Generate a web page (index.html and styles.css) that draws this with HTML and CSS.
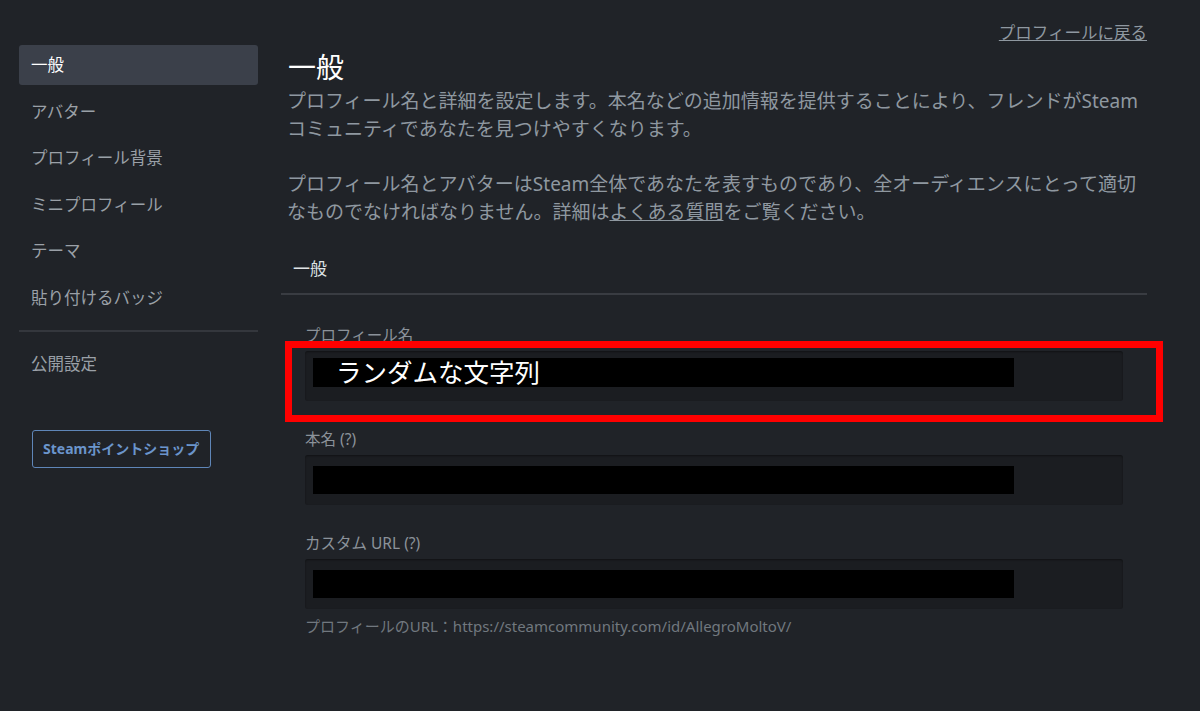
FILE: index.html
```html
<!DOCTYPE html>
<html lang="ja">
<head>
    <meta charset="UTF-8">
    <meta name="viewport" content="width=device-width, initial-scale=1.0">
    <title>プロフィールを編集</title>
    <link rel="stylesheet" href="styles.css">
</head>
<body>
    <div class="page">
        <!-- 左メニュー -->
        <div class="sidebar">
            <div class="nav-item active">一般</div>
            <div class="nav-item">アバター</div>
            <div class="nav-item">プロフィール背景</div>
            <div class="nav-item">ミニプロフィール</div>
            <div class="nav-item">テーマ</div>
            <div class="nav-item">貼り付けるバッジ</div>
            <div class="nav-divider"></div>
            <div class="nav-item privacy">公開設定</div>
            <a class="shop-button" href="#">Steamポイントショップ</a>
        </div>

        <!-- 本体 -->
        <div class="main">
            <div class="back-row">
                <a class="back-link" href="#">プロフィールに戻る</a>
            </div>
            <h1 class="page-title">一般</h1>
            <p class="desc">プロフィール名と詳細を設定します。本名などの追加情報を提供することにより、フレンドがSteamコミュニティであなたを見つけやすくなります。</p>
            <p class="desc">プロフィール名とアバターはSteam全体であなたを表すものであり、全オーディエンスにとって適切なものでなければなりません。詳細は<a href="#">よくある質問</a>をご覧ください。</p>

            <div class="section-head">一般</div>

            <div class="fields">
                <div class="field">
                    <div class="field-label">プロフィール名</div>
                    <div class="input highlighted">
                        <div class="redact first"><span class="redact-text">ランダムな文字列</span></div>
                        <div class="mark"></div>
                    </div>
                </div>
                <div class="field">
                    <div class="field-label">本名 (?)</div>
                    <div class="input">
                        <div class="redact"></div>
                    </div>
                </div>
                <div class="field last">
                    <div class="field-label">カスタム URL (?)</div>
                    <div class="input">
                        <div class="redact"></div>
                    </div>
                    <div class="url-note">プロフィールのURL：https://steamcommunity.com/id/AllegroMoltoV/</div>
                </div>
            </div>
        </div>
    </div>
</body>
</html>
```

FILE: styles.css
```css
body {
    margin: 0;
    background: #202328;
    font-family: "Noto Sans", "Noto Sans CJK JP", sans-serif;
    color: #8f98a0;
}
.page {
    display: flex;
    height: 711px;
}

/* 左メニュー */
.sidebar {
    width: 239px;
    margin-left: 19px;
    padding-top: 45px;
    display: flex;
    flex-direction: column;
    gap: 6.5px;
}
.nav-item {
    height: 40px;
    line-height: 40px;
    padding-left: 12px;
    font-size: 16.5px;
    color: #9aa0a7;
    border-radius: 3px;
}
.nav-item.active {
    background: #3b404a;
    color: #ffffff;
}
.nav-divider {
    height: 2px;
    background: #34373d;
    margin-top: 6px;
}
.nav-item.privacy {
    margin-top: 5px;
}
.shop-button {
    align-self: flex-start;
    margin: 40px 0 0 13px;
    height: 36px;
    line-height: 36px;
    padding: 0 11px 0 10px;
    border: 1px solid #5f86b8;
    border-radius: 3px;
    color: #6b95cc;
    font-size: 14px;
    font-weight: bold;
    text-decoration: none;
}

/* 本体 */
.main {
    width: 866px;
    margin-left: 23px;
    padding-top: 22px;
}
.back-row {
    text-align: right;
    height: 22px;
    line-height: 22px;
}
.back-link {
    font-size: 16.5px;
    color: #8f98a0;
}
.page-title {
    margin: 5px 0 0 7px;
    font-size: 28px;
    font-weight: normal;
    line-height: 36px;
    color: #ffffff;
}
.desc {
    margin: 2px 0 27px 6px;
    font-size: 19px;
    line-height: 28px;
    width: 860px;
}
.desc a {
    color: #8f98a0;
}
.section-head {
    margin-top: 31px;
    padding: 0 0 12px 12px;
    font-size: 17px;
    line-height: 24px;
    color: #dfe3e6;
    border-bottom: 2px solid #393c42;
}

.fields {
    padding: 30px 24px 0 24px;
}
.field {
    margin-bottom: 28px;
}
.field.last {
    margin-bottom: 0;
}
.field-label {
    font-size: 15.5px;
    line-height: 20px;
    color: #8b929a;
    margin-bottom: 6px;
}
.input {
    position: relative;
    height: 50px;
    background: #1b1d21;
    border-radius: 3px;
    box-shadow: inset 0 1px 2px rgba(0, 0, 0, 0.4);
    padding: 11px 0 0 8px;
    box-sizing: border-box;
}
.input.highlighted {
    padding-top: 7px;
}
.redact {
    width: 701px;
    height: 28px;
    background: #000000;
}
.redact.first {
    height: 29px;
}
.redact-text {
    display: block;
    padding-left: 23px;
    font-size: 25.5px;
    line-height: 29px;
    color: #ffffff;
}

/* 注釈の赤枠 */
.mark {
    position: absolute;
    left: -20px;
    top: -10px;
    right: -40px;
    bottom: -21px;
    border: 7px solid #ff0000;
}
.url-note {
    margin-top: 8px;
    font-size: 15px;
    line-height: 18px;
    color: #71787f;
}
```
